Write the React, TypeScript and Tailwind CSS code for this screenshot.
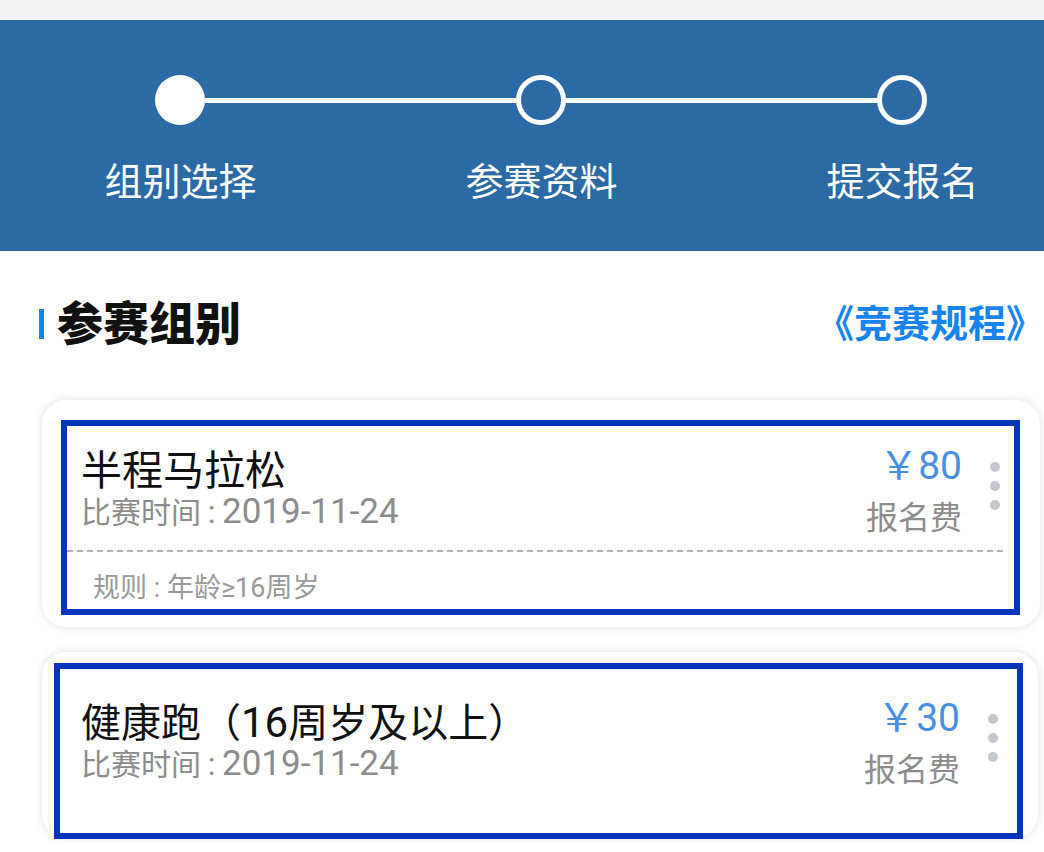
import React from "react";

function Dots() {
  return (
    <div className="ml-[28px] mt-[15px] flex flex-col gap-[9px]">
      <div className="h-[10px] w-[10px] rounded-full bg-[#c3c7ce]" />
      <div className="h-[10px] w-[10px] rounded-full bg-[#c3c7ce]" />
      <div className="h-[10px] w-[10px] rounded-full bg-[#c3c7ce]" />
    </div>
  );
}

function CardRow({ title, price }: { title: React.ReactNode; price: string }) {
  return (
    <div className="flex items-start pl-[39px] pr-[40px] pt-[47px]">
      <div className="flex-1 mt-[4px]">
        <div className="text-[40px] leading-[40px] text-[#111] whitespace-nowrap">{title}</div>
        <div className="mt-[5px] flex items-baseline text-[30px] leading-[30px] text-[#8c8c8c] whitespace-nowrap">
          <span>比赛时间</span>
          <span className="inline-block w-[21px] text-center text-[32px]">:</span>
          <span className="text-[35px]">2019-11-24</span>
        </div>
      </div>
      <div className="flex flex-col items-end">
        <div className="text-[39px] leading-[39px] text-[#4a8fe2] whitespace-nowrap">￥{price}</div>
        <div className="mt-[16px] text-[32px] leading-[32px] text-[#8c8c8c] whitespace-nowrap">报名费</div>
      </div>
      <Dots />
    </div>
  );
}

export default function App() {
  return (
    <div className="w-[1044px] h-[852px] overflow-hidden bg-white font-['Roboto','Noto_Sans_CJK_SC',sans-serif]">
      <div className="h-[20px] bg-[#f2f2f2]" />
      <div className="h-[231px] bg-[#2c6aa5] pt-[55px] overflow-hidden">
        <div className="flex items-center pl-[155px]">
          <div className="h-[50px] w-[50px] rounded-full bg-white" />
          <div className="h-[5px] w-[311px] bg-white" />
          <div className="h-[50px] w-[50px] rounded-full border-[5px] border-white" />
          <div className="h-[5px] w-[311px] bg-white" />
          <div className="h-[50px] w-[50px] rounded-full border-[5px] border-white" />
        </div>
        <div className="mt-[38px] grid grid-cols-[361px_361px_361px] text-[38px] leading-[38px] text-white">
          <div className="text-center">组别选择</div>
          <div className="text-center">参赛资料</div>
          <div className="text-center">提交报名</div>
        </div>
      </div>

      <div className="mt-[51px] flex items-center pl-[39px]">
        <div className="h-[30px] w-[5px] bg-[#1a80f0]" />
        <div className="ml-[13px] text-[46px] leading-[44px] font-black text-[#111]">参赛组别</div>
        <div className="flex-1" />
        <div className="text-[38px] leading-[38px] font-bold text-[#1784f0] whitespace-nowrap">《竞赛规程》</div>
      </div>

      <div className="relative mt-[54px] ml-[42px] w-[998px] rounded-[24px] bg-white shadow-[0_0_10px_rgba(0,0,0,0.13)]">
        <CardRow title={<span className="text-[41px]">半程马拉松</span>} price="80" />
        <div className="mt-[16px] ml-[25px] mr-[35px] h-[2px] bg-[linear-gradient(to_right,#b4b4b4_60%,transparent_0)] bg-[length:10px_2px]" />
        <div className="mt-[23px] pb-[26px] pl-[51px] text-[27px] leading-[26px] text-[#999]">规则 : 年龄≥16周岁</div>
        <div className="pointer-events-none absolute left-[19px] top-[20px] right-[20px] bottom-[12px] border-[6px] border-[#0235b9]" />
      </div>

      <div className="relative mt-[25px] ml-[42px] w-[996px] rounded-[24px] bg-white pb-[52px] shadow-[0_0_10px_rgba(0,0,0,0.13)]">
        <CardRow
          title={
            <>
              健康跑（<span className="text-[42px]">16</span>周岁及以上）
            </>
          }
          price="30"
        />
        <div className="pointer-events-none absolute left-[12px] top-[11px] right-[15px] bottom-[-1px] border-[6px] border-[#0235b9]" />
      </div>
    </div>
  );
}
